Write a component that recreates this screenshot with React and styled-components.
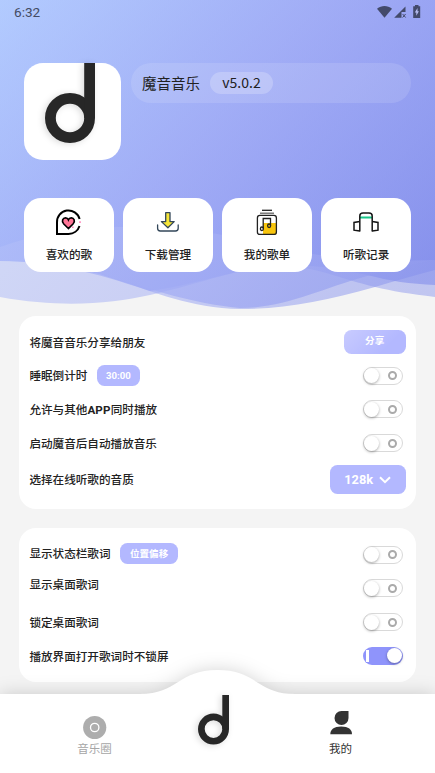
import React from 'react';
import styled, { createGlobalStyle } from 'styled-components';

const GlobalStyle = createGlobalStyle`
  * {
    box-sizing: border-box;
  }

  html, body {
    margin: 0;
    height: 773px;
    overflow: hidden;
    background: #f4f4f4;
  }

  body {
    font-family: Roboto, 'Noto Sans CJK SC', sans-serif;
    color: #222;
  }

  svg {
    display: block;
  }
`;

const App = () => {
  return (
    <Screen>
      <GlobalStyle />
      <Waves />
      <StatusBar>
        <Clock>6:32</Clock>
        <StatusIcons />
      </StatusBar>

      <Profile>
        <LogoCard>
          <Logo width={50} height={80} />
        </LogoCard>
        <NameBar>
          <AppName>魔音音乐</AppName>
          <Version>v5.0.2</Version>
        </NameBar>
      </Profile>

      <Tiles>
        <Tile><HeartIcon />喜欢的歌</Tile>
        <Tile><DownloadIcon />下载管理</Tile>
        <Tile><PlaylistIcon />我的歌单</Tile>
        <Tile><HeadphoneIcon />听歌记录</Tile>
      </Tiles>

      <Panel>
        <Row>
          <Label>将魔音音乐分享给朋友</Label>
          <ShareButton>分享</ShareButton>
        </Row>
        <Row>
          <Label>睡眠倒计时</Label>
          <Chip $width={43}>30:00</Chip>
          <Switch />
        </Row>
        <Row>
          <Label>允许与其他<b>APP</b>同时播放</Label>
          <Switch />
        </Row>
        <Row>
          <Label>启动魔音后自动播放音乐</Label>
          <Switch />
        </Row>
        <Row $height={39}>
          <Label>选择在线听歌的音质</Label>
          <QualityButton>
            128k
            <svg width="12" height="8" viewBox="0 0 12 8" fill="none" stroke="#fff" strokeWidth="2">
              <path d="M1 1.2 6 6.2 11 1.2" />
            </svg>
          </QualityButton>
        </Row>
      </Panel>

      <Panel>
        <Row>
          <Label $lift={2}>显示状态栏歌词</Label>
          <Chip $width={58} $lift={2}>位置偏移</Chip>
          <Switch />
        </Row>
        <Row>
          <Label $lift={8}>显示桌面歌词</Label>
          <Switch />
        </Row>
        <Row>
          <Label>锁定桌面歌词</Label>
          <Switch />
        </Row>
        <Row>
          <Label>播放界面打开歌词时不锁屏</Label>
          <Switch on />
        </Row>
      </Panel>

      <BottomNav>
        <NavShape width="435" height="123" viewBox="0 0 435 123">
          <path d="M0 44H140C178 44 178 20 217.500 20S257 44 295 44H435V123H0Z" fill="#fff" />
        </NavShape>
        <NavItem $color="#a6a6a6">
          <NavIcon width="24" height="24" viewBox="0 0 24 24">
            <circle cx="11.700" cy="12.500" r="11.600" fill="#adadad" />
            <circle cx="11.700" cy="12.500" r="4.200" fill="none" stroke="#fff" strokeWidth="1.300" />
          </NavIcon>
          音乐圈
        </NavItem>
        <NavLogo>
          <Logo width={31} height={49.6} />
        </NavLogo>
        <NavItem $color="#333">
          <NavIcon width="24" height="24" viewBox="0 0 24 24" fill="#333">
            <path d="M12.500-4H19.500V3A7 7 0 1 1 12.500-4Z" />
            <path d="M1.300 19.300C1.300 14.500 5 11.500 12.200 11.500S23 14.500 23 19.300Z" />
          </NavIcon>
          我的
        </NavItem>
      </BottomNav>
    </Screen>
  );
};

const Waves = () => (
  <WaveLayer width="435" height="320" viewBox="0 0 435 320">
    <defs>
      <linearGradient id="sky" gradientUnits="userSpaceOnUse" x1="20" y1="-30" x2="395" y2="310">
        <stop offset="0" stopColor="#b0caff" />
        <stop offset="0.500" stopColor="#9da9f6" />
        <stop offset="1" stopColor="#838eec" />
      </linearGradient>
    </defs>
    <path
      d="M0 0H435V297C410 294 392 291 375 287C340 279 310 264 275 266C235 269 200 284 150 295C110 304 60 308 0 297Z"
      fill="url(#sky)" opacity="0.450"
    />
    <path
      d="M0 0H435V270C415 275 395 281 375 287C325 301 285 309 240 309C190 308 155 292 120 281C85 268 50 261 0 261Z"
      fill="url(#sky)" opacity="0.500"
    />
    <path
      d="M0 0H435V260C410 265 390 270 367 276C320 289 285 308 240 308C190 303 155 290 120 280C85 268 50 261 0 261Z"
      fill="url(#sky)" opacity="0.650"
    />
    <path
      d="M0 0H435V285C410 284 390 281 367 275C335 268 315 264 275 266C235 269 200 284 150 291C110 278 60 261 0 261Z"
      fill="url(#sky)" opacity="0.600"
    />
    <path
      d="M0 247C35 234 75 227 118 227C180 227 220 232 270 246C320 258 380 262 435 260C410 265 390 270 367 276C320 289 285 308 240 308C190 303 155 290 120 280C85 268 50 261 0 261Z"
      fill="#fff" opacity="0.080"
    />
  </WaveLayer>
);

const StatusIcons = () => (
  <svg width="44" height="14" viewBox="0 0 44 14" fill="#434a6b">
    <path d="M0 3.800C4.500 0 10.500 0 15 3.800L7.500 12.800Z" />
    <path d="M28.500 1.500V7H24.500V12.800H17.200Z" />
    <path d="M25.600 9 28.600 12.500M28.600 9 25.600 12.500" stroke="#434a6b" strokeWidth="1" />
    <path d="M38 1.200V0H41.500V1.200H43.200V13H36.200V1.200Z" />
    <path d="M40.500 3 37.800 7.500H39.300V10.800L41.900 6.300H40.500Z" fill="#b7bdf2" />
  </svg>
);

const Logo = ({ width, height }) => (
  <LogoSvg width={width} height={height} viewBox="0 0 50 80" fill="none" stroke="#272727">
    <circle cx="25" cy="55" r="19.600" strokeWidth="10.800" />
    <path d="M44.600 0V55" strokeWidth="10.800" />
  </LogoSvg>
);

const HeartIcon = () => (
  <svg width="28" height="28" viewBox="0 0 28 28" fill="none">
    <path d="M24.600 11A11.500 11.500 0 0 0 2 14.500V26H13.500A11.500 11.500 0 0 0 24.500 18" stroke="#000" strokeWidth="2" />
    <path d="M13.400 20.500 8.800 16C6 13 8 9.800 10.500 9.800C12 9.800 13 10.800 13.400 11.800C13.800 10.800 14.800 9.800 16.300 9.800C18.800 9.800 20.800 13 18 16Z" fill="#ff7597" stroke="#000" strokeWidth="1.700" />
    <path d="M25 13.200V15M17.800 18.500V20" stroke="#ff7bb5" strokeWidth="1.500" />
  </svg>
);

const DownloadIcon = () => (
  <svg width="28" height="28" viewBox="0 0 28 28" fill="none" stroke="#33475a" strokeWidth="1.300" strokeLinejoin="round">
    <path d="M11.700 4.700H16V13.600H20.200L13.900 19.700 7.400 13.600H11.700Z" fill="#f6e538" />
    <path d="M3.600 17V20.300Q3.600 23 6.300 23H21.500Q24.200 23 24.200 20.300V17" strokeLinecap="round" />
  </svg>
);

const PlaylistIcon = () => (
  <svg width="28" height="28" viewBox="0 0 28 28" fill="none" stroke="#222" strokeWidth="1.300">
    <path d="M9 2.300H19" />
    <path d="M7 5.200H21" stroke="#666" />
    <path d="M10 15H23.500V26.500H10Z" fill="#f8c50d" stroke="none" />
    <rect x="4.400" y="7.400" width="19" height="19" rx="2.500" />
    <path d="M10.200 20.500V10.500H17.500V17.500" />
    <ellipse cx="8.900" cy="20.800" rx="1.500" ry="1.800" />
    <ellipse cx="16.100" cy="17.800" rx="1.500" ry="1.800" />
  </svg>
);

const HeadphoneIcon = () => (
  <svg width="28" height="28" viewBox="0 0 28 28" fill="none" stroke="#151515" strokeWidth="1.500">
    <path d="M8 9.500H20" stroke="#19c78a" strokeWidth="2" />
    <path d="M7.800 23.500V8Q7.800 5 11 5H17Q20.200 5 20.200 8V23.500" />
    <path d="M7.800 13.500 2 14.500V22.200L7.800 23M20.200 13.500 26 14.500V22.200L20.200 23" />
  </svg>
);

const Switch = ({ on }) => (
  <Track $on={on}>
    <Knob $on={on} />
    {on ? <OnMark /> : <OffMark />}
  </Track>
);

const Screen = styled.div`
  position: relative;
  width: 435px;
  height: 773px;
  overflow: hidden;
  background: #f4f4f4;
`;

const WaveLayer = styled.svg`
  position: absolute;
  top: 0;
  left: 0;
`;

const StatusBar = styled.header`
  position: relative;
  display: flex;
  justify-content: space-between;
  align-items: center;
  height: 24px;
  padding: 0 14px;
`;

const Clock = styled.span`
  font-size: 13.6px;
  color: #444b63;
`;

const Profile = styled.section`
  position: relative;
  display: flex;
  align-items: flex-start;
  gap: 9.500px;
  padding: 39px 24px 0;
`;

const LogoCard = styled.div`
  width: 97px;
  height: 96.5px;
  padding-left: 21px;
  border-radius: 19px;
  background: #fff;
`;

const LogoSvg = styled.svg`
  filter: drop-shadow(-2px 1px 3px rgba(0, 0, 0, 0.14));
`;

const NameBar = styled.div`
  flex: 1;
  display: flex;
  align-items: center;
  gap: 10px;
  height: 40px;
  padding-left: 11.5px;
  border-radius: 20px;
  background: rgba(255, 255, 255, 0.12);
  font-family: 'Noto Sans CJK SC', sans-serif;
`;

const AppName = styled.span`
  font-size: 14.5px;
  line-height: 20px;
`;

const Version = styled.span`
  width: 63px;
  height: 22px;
  border-radius: 11px;
  background: rgba(255, 255, 255, 0.22);
  font-size: 14px;
  line-height: 21px;
  text-align: center;
`;

const Tiles = styled.section`
  position: relative;
  display: grid;
  grid-template-columns: repeat(4, 1fr);
  gap: 9.300px;
  padding: 38.500px 24px 0;
`;

const Tile = styled.div`
  display: flex;
  flex-direction: column;
  align-items: center;
  height: 74px;
  padding-top: 10px;
  gap: 10px;
  border-radius: 17px;
  background: #fff;
  font-size: 11.6px;
  font-weight: 500;
  line-height: 18px;
`;

const Panel = styled.section`
  position: relative;
  margin: 0 19.300px 0 19px;
  padding: 9.500px 10px 9.500px 10.400px;
  border-radius: 17px;
  background: #fff;

  ${Tiles} + & {
    margin-top: 43.500px;
  }

  & + & {
    margin-top: 19.500px;
  }
`;

const Row = styled.div`
  display: flex;
  align-items: center;
  height: ${({ $height }) => $height || 33.8}px;
`;

const Label = styled.span`
  padding: 1.500px 0 ${({ $lift }) => $lift || 0}px;
  font-size: 11.6px;
  font-weight: 500;
  line-height: 18px;

  b {
    letter-spacing: 0.2px;
  }
`;

const Chip = styled.span`
  width: ${({ $width }) => $width}px;
  height: 21.5px;
  margin: 0 0 ${({ $lift }) => $lift || 0}px 9.500px;
  border-radius: 7.5px;
  background: #b3b8ff;
  color: #fff;
  font-size: 9.6px;
  font-weight: 700;
  line-height: 22px;
  text-align: center;
`;

const ShareButton = styled.button`
  width: 62px;
  height: 24px;
  margin-left: auto;
  padding: 0 0 2px;
  border: 0;
  border-radius: 7.5px;
  background: linear-gradient(135deg, #c8cbff, #b3b8ff 70%);
  color: #fff;
  font: 700 9.6px/20px Roboto, 'Noto Sans CJK SC', sans-serif;
`;

const QualityButton = styled.button`
  display: flex;
  align-items: center;
  justify-content: center;
  gap: 6px;
  width: 76px;
  height: 29px;
  margin-left: auto;
  padding: 1px 0 0;
  border: 0;
  border-radius: 7.5px;
  background: #b3b8ff;
  color: #fff;
  font: 700 12.8px/20px Roboto, sans-serif;
`;

const Track = styled.span`
  display: flex;
  align-items: center;
  justify-content: space-between;
  flex-direction: ${({ $on }) => ($on ? 'row-reverse' : 'row')};
  width: 40px;
  height: 18px;
  margin: 0 3px 0 auto;
  padding: ${({ $on }) => ($on ? '0 1px 0 3px' : '0 5px 0 0')};
  border: ${({ $on }) => ($on ? '0' : '1px solid #d9d9d9')};
  border-radius: 9px;
  background: ${({ $on }) => ($on ? '#8f94fb' : '#fff')};
`;

const Knob = styled.span`
  width: 15px;
  height: 15px;
  border-radius: 50%;
  background: #fff;
  box-shadow: 0 1px 3px rgba(0, 0, 0, 0.35);
`;

const OffMark = styled.span`
  width: 9px;
  height: 9px;
  border: 2px solid #aaa;
  border-radius: 50%;
`;

const OnMark = styled.span`
  width: 3px;
  height: 12px;
  background: #fff;
`;

const BottomNav = styled.nav`
  position: absolute;
  left: 0;
  bottom: 0;
  width: 435px;
  height: 123px;
  display: flex;
  justify-content: space-between;
  padding: 65px 64.500px 0;
`;

const NavShape = styled.svg`
  position: absolute;
  left: 0;
  top: 0;
  overflow: visible;
  filter: drop-shadow(0 0 9px rgba(0, 0, 0, 0.17));
`;

const NavItem = styled.a`
  position: relative;
  display: flex;
  flex-direction: column;
  align-items: center;
  width: 60px;
  color: ${({ $color }) => $color};
  font-family: 'Noto Sans CJK SC', sans-serif;
  font-size: 11.5px;
  line-height: 18px;
`;

const NavIcon = styled.svg`
  overflow: visible;
`;

const NavLogo = styled.div`
  position: relative;
  margin: -20px 8.500px 0 0;
`;

export default App;
